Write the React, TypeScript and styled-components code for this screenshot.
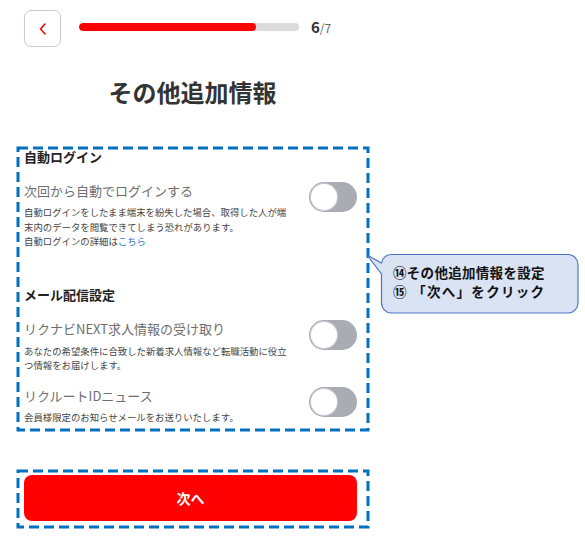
import React, { FC, ReactNode } from "react"
import styled, { createGlobalStyle } from "styled-components"

const FONT = `"Noto Sans CJK JP", "Noto Sans", sans-serif`
const FRAME_BLUE = "#0070c0"
const RED = "#ff0000"

const GlobalStyle = createGlobalStyle`
  html, body {
    margin: 0;
    padding: 0;
    background: #ffffff;
  }
  body {
    font-family: ${FONT};
    color: #333333;
  }
`

// dashed annotation frame drawn over its children
const DashedFrame: FC<{ children: ReactNode; className?: string }> = ({
  children,
  className,
}) => (
  <Frame className={className}>
    {children}
    <FrameLine>
      <rect
        x="0"
        y="0"
        width="100%"
        height="100%"
        fill="none"
        stroke={FRAME_BLUE}
        strokeWidth="3"
        strokeDasharray="10 5"
      />
    </FrameLine>
  </Frame>
)

const Toggle: FC = () => (
  <Track>
    <Knob />
  </Track>
)

type SettingProps = { label: string; children: ReactNode; gap: number }

const Setting: FC<SettingProps> = ({ label, children, gap }) => (
  <SettingRow>
    <SettingText>
      <Label>{label}</Label>
      <Desc $gap={gap}>{children}</Desc>
    </SettingText>
    <Toggle />
  </SettingRow>
)

const Callout: FC = () => (
  <CalloutBox>
    <svg width="220" height="70" viewBox="0 0 220 70">
      <path
        d="M 27.5 4.5 H 204 A 10 10 0 0 1 214 14.5 V 53 A 10 10 0 0 1 204 63 H 27.5 A 10 10 0 0 1 17.5 53 V 24 L 3 5 L 17.5 13 A 10 10 0 0 1 27.5 4.5 Z"
        fill="#dae3f3"
        stroke="#4a74c4"
        strokeWidth="1.2"
      />
    </svg>
    <CalloutText>
      <CalloutLine $spacing={0.3}>⑭その他追加情報を設定</CalloutLine>
      <CalloutLine $spacing={1.3}>⑮ 「次へ」をクリック</CalloutLine>
    </CalloutText>
  </CalloutBox>
)

export default function App() {
  return (
    <>
      <GlobalStyle />
      <Page>
        <Header>
          <BackButton aria-label="戻る">
            <svg width="10" height="14" viewBox="0 0 10 14">
              <polyline
                points="7,2 2.5,7 7,12"
                fill="none"
                stroke={RED}
                strokeWidth="1.6"
                strokeLinecap="round"
                strokeLinejoin="round"
              />
            </svg>
          </BackButton>
          <Progress>
            <ProgressFill style={{ width: "80.5%" }} />
          </Progress>
          <Counter>
            <b>6</b>
            <span>/7</span>
          </Counter>
        </Header>

        <Title>その他追加情報</Title>

        <SettingsFrame>
          <SectionHeading>自動ログイン</SectionHeading>
          <FirstSetting>
            <Setting label="次回から自動でログインする" gap={3}>
              自動ログインをしたまま端末を紛失した場合、取得した人が端末内のデータを閲覧できてしまう恐れがあります。
              <br />
              自動ログインの詳細は<Link>こちら</Link>
            </Setting>
          </FirstSetting>

          <SecondHeading>メール配信設定</SecondHeading>
          <FirstSetting>
            <Setting label="リクナビNEXT求人情報の受け取り" gap={4}>
              あなたの希望条件に合致した新着求人情報など転職活動に役立つ情報をお届けします。
            </Setting>
          </FirstSetting>
          <NextSetting>
            <Setting label="リクルートIDニュース" gap={3}>
              会員様限定のお知らせメールをお送りいたします。
            </Setting>
          </NextSetting>
        </SettingsFrame>

        <ButtonFrame>
          <NextButton>次へ</NextButton>
        </ButtonFrame>

        <Callout />
      </Page>
    </>
  )
}

const Page = styled.div`
  position: relative;
  width: 585px;
  min-height: 537px;
  padding: 10px 0 0 16px;
  box-sizing: border-box;
`

const Header = styled.div`
  display: flex;
  align-items: center;
  padding-left: 8px;
`

const BackButton = styled.button`
  display: flex;
  align-items: center;
  justify-content: center;
  width: 37px;
  height: 37px;
  padding: 0;
  border: 1px solid #c6cbda;
  border-radius: 7px;
  background: #ffffff;
`

const Progress = styled.div`
  width: 220px;
  height: 8px;
  margin-left: 18px;
  margin-top: -3px;
  border-radius: 4px;
  background: #dcdcdc;
  overflow: hidden;
`

const ProgressFill = styled.div`
  height: 100%;
  border-radius: 4px;
  background: ${RED};
`

const Counter = styled.div`
  margin-left: 12px;
  margin-top: -6px;
  font-family: ${FONT};
  b {
    font-size: 15px;
    font-weight: 700;
    color: #333333;
  }
  span {
    font-size: 12px;
    color: #666666;
  }
`

const Title = styled.h1`
  width: 353px;
  margin: 30px 0 0;
  font-size: 24px;
  line-height: 30px;
  font-weight: 700;
  color: #333333;
  text-align: center;
`

const Frame = styled.div`
  position: relative;
  width: 353px;
  box-sizing: border-box;
`

const FrameLine = styled.svg`
  position: absolute;
  top: 1.5px;
  left: 1.5px;
  width: calc(100% - 3px);
  height: calc(100% - 3px);
  overflow: visible;
  pointer-events: none;
`

const SettingsFrame = styled(DashedFrame)`
  margin-top: 39px;
  padding: 2px 12px 7px 8px;
`

const SectionHeading = styled.div`
  font-size: 13px;
  line-height: 18px;
  font-weight: 700;
  color: #222222;
`

const SecondHeading = styled(SectionHeading)`
  margin-top: 37px;
`

const FirstSetting = styled.div`
  margin-top: 14px;
`

const NextSetting = styled.div`
  margin-top: 12px;
`

const SettingRow = styled.div`
  display: flex;
  justify-content: space-between;
  align-items: flex-start;
`

const SettingText = styled.div`
  width: 266px;
`

const Label = styled.div`
  font-size: 13px;
  line-height: 22px;
  color: #6e6e6e;
  white-space: nowrap;
`

const Desc = styled.div<{ $gap: number }>`
  margin-top: ${(p) => p.$gap}px;
  font-size: 9.4px;
  line-height: 14.5px;
  color: #444444;
`

const Link = styled.span`
  color: #2a7dd1;
`

const Track = styled.div`
  display: flex;
  align-items: center;
  width: 48px;
  height: 30px;
  margin-top: 2px;
  padding: 0 2px;
  box-sizing: border-box;
  border-radius: 15px;
  background: #a9acb4;
`

const Knob = styled.div`
  width: 26px;
  height: 26px;
  border-radius: 50%;
  background: #ffffff;
  box-shadow: 0 0 0 1px #c9ccd2;
`

const ButtonFrame = styled(DashedFrame)`
  margin-top: 38px;
  height: 59px;
  padding: 6px 12px 0 8px;
`

const NextButton = styled.button`
  display: block;
  width: 100%;
  height: 46px;
  border: none;
  border-radius: 8px;
  background: ${RED};
  color: #ffffff;
  font-family: ${FONT};
  font-size: 14px;
  font-weight: 700;
`

const CalloutBox = styled.div`
  position: absolute;
  left: 364px;
  top: 250px;
  width: 220px;
  height: 70px;
  svg {
    display: block;
  }
`

const CalloutText = styled.div`
  position: absolute;
  left: 29px;
  top: 13px;
  font-size: 13.5px;
  line-height: 19px;
  font-weight: 700;
  color: #111111;
  white-space: nowrap;
`

const CalloutLine = styled.div<{ $spacing: number }>`
  letter-spacing: ${(p) => p.$spacing}px;
`
